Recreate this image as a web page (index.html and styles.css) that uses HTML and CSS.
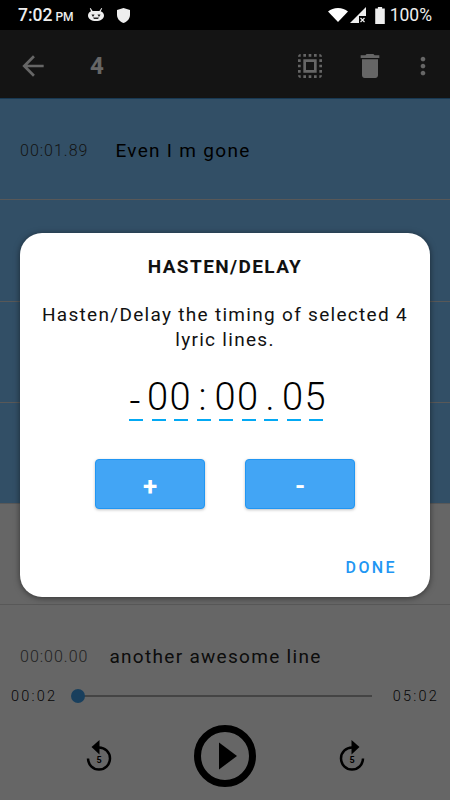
FILE: index.html
```html
<!DOCTYPE html>
<html lang="en">
<head>
  <meta charset="UTF-8" />
  <meta name="viewport" content="width=device-width, initial-scale=1.0" />
  <title>Hasten/Delay</title>
  <link rel="stylesheet" href="styles.css">
</head>
<body>
  <div class="app">
    <div class="statusbar">
      <span class="clock">7:02<small>PM</small></span>
      <svg class="st-cat" viewBox="0 0 16 14"><path d="M2.600 0l2 3h6.800l2-3 .8.5-1.600 2.700C14.900 4 16 5.600 16 7.500 16 11 12.500 13 8 13S0 11 0 7.500C0 5.600 1.100 4 3 3.200L1.800.5z" fill="#eee"/><path d="M3.500 6.500h3l-1 2h-1zM9.500 6.500h3l-1 2h-1zM5 9.500h6l-1 1.500H6z" fill="#222"/></svg>
      <svg class="st-shield" viewBox="0 0 14 16"><path d="M7 0l7 2.200v5C14 11.500 11 14.700 7 16 3 14.700 0 11.500 0 7.200v-5z" fill="#eee"/></svg>
      <span class="status-right">
        <svg class="st-wifi" viewBox="0 0 20 14"><path d="M0 3.600C2.700 1.300 6.200 0 10 0s7.300 1.300 10 3.600L10 14z" fill="#fff"/></svg>
        <svg class="st-signal" viewBox="0 0 16 16"><path d="M16 0v9H9v7H0z" fill="#eee"/><path d="M10.500 11l4 4m0-4l-4 4" stroke="#eee" stroke-width="1.200"/></svg>
        <svg class="st-batt" viewBox="0 0 9 16"><path d="M2.500 0h4v1.500H9V16H0V1.500h2.500z" fill="#eee"/></svg>
        <span class="batt-text">100%</span>
      </span>
    </div>

    <div class="toolbar">
      <svg class="tb-back" viewBox="0 0 24 24"><path d="M20 11H7.830l5.590-5.590L12 4l-8 8 8 8 1.410-1.410L7.830 13H20v-2z"/></svg>
      <span class="tb-count">4</span>
      <svg class="tb-select" viewBox="0 0 24 24"><path d="M3 5h2V3c-1.100 0-2 .9-2 2zm0 8h2v-2H3v2zm4 8h2v-2H7v2zM3 9h2V7H3v2zm10-6h-2v2h2V3zm6 0v2h2c0-1.100-.9-2-2-2zM5 21v-2H3c0 1.100.9 2 2 2zm-2-4h2v-2H3v2zM9 3H7v2h2V3zm2 18h2v-2h-2v2zm8-8h2v-2h-2v2zm0 8c1.100 0 2-.9 2-2h-2v2zm0-12h2V7h-2v2zm0 8h2v-2h-2v2zm-4 4h2v-2h-2v2zm0-16h2V3h-2v2zM7 17h10V7H7v10zm2-8h6v6H9V9z"/></svg>
      <svg class="tb-delete" viewBox="0 0 24 24"><path d="M6 19c0 1.100.9 2 2 2h8c1.100 0 2-.9 2-2V7H6v12zM19 4h-3.500l-1-1h-5l-1 1H5v2h14V4z"/></svg>
      <svg class="tb-more" viewBox="0 0 24 24"><path d="M12 8c1.100 0 2-.9 2-2s-.9-2-2-2-2 .9-2 2 .9 2 2 2zm0 2c-1.100 0-2 .9-2 2s.9 2 2 2 2-.9 2-2-.9-2-2-2zm0 6c-1.100 0-2 .9-2 2s.9 2 2 2 2-.9 2-2-.9-2-2-2z"/></svg>
    </div>

    <div class="list">
      <div class="row selected">
        <span class="row-time">00:01.89</span>
        <span class="row-lyric">Even I m gone</span>
      </div>
      <div class="row selected"></div>
      <div class="row selected"></div>
      <div class="row selected"></div>
      <div class="row"></div>
      <div class="row">
        <span class="row-time">00:00.00</span>
        <span class="row-lyric">another awesome line</span>
      </div>
    </div>

    <div class="player">
      <div class="seek">
        <span class="seek-time">00:02</span>
        <div class="track"><div class="thumb"></div></div>
        <span class="seek-time">05:02</span>
      </div>
      <div class="controls">
        <svg class="skip" viewBox="0 0 28 34">
          <path d="M14 8.500a11 11 0 1 1-11 11" fill="none" stroke="#000" stroke-width="2.500"/>
          <path d="M14.500 1L6.500 8l8 7.500z"/>
          <text x="14" y="23.500" text-anchor="middle" class="skip-num">5</text>
        </svg>
        <svg class="play" viewBox="0 0 64 64">
          <circle cx="32" cy="32" r="27.500" fill="none" stroke="#000" stroke-width="7"/>
          <path d="M26 18.500l18 13.500-18 13.500z"/>
        </svg>
        <svg class="skip" viewBox="0 0 28 34">
          <path d="M14 8.500a11 11 0 1 0 11 11" fill="none" stroke="#000" stroke-width="2.500"/>
          <path d="M13.500 1l8 7-8 7.500z"/>
          <text x="14" y="23.500" text-anchor="middle" class="skip-num">5</text>
        </svg>
      </div>
    </div>

    <div class="overlay">
      <div class="dialog">
        <h2 class="dialog-title">HASTEN/DELAY</h2>
        <p class="dialog-text">Hasten/Delay the timing of selected 4 lyric lines.</p>
        <div class="timer">
          <span class="dash">-</span><span>0</span><span>0</span><span>:</span><span>0</span><span>0</span><span>.</span><span>0</span><span>5</span>
        </div>
        <div class="btn-row">
          <button class="step-btn">+</button>
          <button class="step-btn">-</button>
        </div>
        <div class="dialog-actions">
          <button class="done-btn">DONE</button>
        </div>
      </div>
    </div>
  </div>
</body>
</html>
```

FILE: styles.css
```css
* {
  box-sizing: border-box;
}
body {
  margin: 0;
  font-family: 'Roboto', 'Liberation Sans', sans-serif;
  background: #fff;
  color: #000;
}
.app {
  position: relative;
  width: 450px;
  height: 800px;
  overflow: hidden;
  display: flex;
  flex-direction: column;
}

/* status bar */
.statusbar {
  height: 30px;
  background: #000;
  color: #eee;
  display: flex;
  align-items: center;
  padding: 0 18px;
  flex-shrink: 0;
}
.clock {
  font-size: 17.500px;
  font-weight: 500;
  width: 70px;
}
.clock small {
  font-size: 12px;
  margin-left: 3px;
}
.st-cat {
  width: 16px;
  height: 14px;
}
.st-shield {
  width: 13px;
  height: 15px;
  margin-left: 13px;
}
.status-right {
  margin-left: auto;
  display: flex;
  align-items: center;
}
.st-wifi {
  width: 20px;
  height: 14px;
}
.st-signal {
  width: 16px;
  height: 16px;
  margin-left: 2px;
}
.st-batt {
  width: 10px;
  height: 17px;
  margin-left: 9px;
}
.batt-text {
  font-size: 17.500px;
  margin-left: 5px;
}

/* toolbar */
.toolbar {
  height: 68px;
  background: #333;
  display: flex;
  align-items: center;
  padding: 3px 0 0 17px;
  flex-shrink: 0;
  position: relative;
}
.toolbar svg {
  fill: #fff;
  flex-shrink: 0;
}
.tb-back {
  width: 32px;
  height: 32px;
}
.tb-count {
  color: #fff;
  font-size: 24px;
  font-weight: 700;
  margin-left: 41px;
}
.tb-select {
  width: 32px;
  height: 32px;
  margin-left: auto;
}
.tb-delete {
  width: 32px;
  height: 32px;
  margin-left: 28px;
}
.tb-more {
  width: 28px;
  height: 28px;
  margin-left: 23px;
  margin-right: 13px;
}

/* lyric rows */
.list {
  height: 576px;
  overflow: hidden;
  flex-shrink: 0;
  border-top: 1px solid #3d8fd0;
}
.row {
  height: 101.300px;
  display: flex;
  align-items: center;
  padding: 2px 0 0 20px;
  border-bottom: 1px solid #ddd;
}
.row.selected {
  background: #7dc6ff;
}
.row-time {
  font-size: 16px;
  font-weight: 300;
  letter-spacing: 1px;
  color: #555;
}
.row-lyric {
  font-size: 19px;
  letter-spacing: 1.300px;
  margin-left: 21px;
  color: #222;
}
.selected .row-time {
  color: #333;
}
.selected .row-lyric {
  color: #000;
  margin-left: 27px;
}

/* player */
.player {
  flex: 1;
  display: flex;
  flex-direction: column;
}
.seek {
  display: flex;
  align-items: center;
  justify-content: space-between;
  padding: 0 11px;
  margin-top: 10px;
  height: 24px;
}
.seek-time {
  font-size: 14.500px;
  font-weight: 300;
  letter-spacing: 2.200px;
  color: #111;
}
.track {
  position: relative;
  width: 294px;
  height: 2px;
  background: #aaa;
}
.thumb {
  position: absolute;
  left: -7px;
  top: -6px;
  width: 14px;
  height: 14px;
  border-radius: 50%;
  background: #3f9fe8;
}
.controls {
  display: flex;
  align-items: center;
  justify-content: center;
  gap: 75.500px;
  margin-top: 16px;
}
.skip {
  width: 28px;
  height: 34px;
}
.play {
  width: 64px;
  height: 64px;
  margin: 0 5px;
}
.skip-num {
  font-size: 9px;
  font-weight: 700;
  font-family: 'Roboto', sans-serif;
}

/* dialog */
.overlay {
  position: absolute;
  top: 30px;
  left: 0;
  right: 0;
  bottom: 0;
  background: rgba(0,0,0,0.6);
  display: flex;
  align-items: center;
  justify-content: center;
}
.dialog {
  width: 410px;
  height: 364px;
  background: #fff;
  border-radius: 22px;
  padding-top: 24px;
  box-shadow: 0 1px 6px rgba(0,0,0,0.5);
  text-align: center;
  display: flex;
  flex-direction: column;
}
.dialog-title {
  margin: 0;
  font-size: 19px;
  font-weight: 700;
  line-height: 20px;
  letter-spacing: 1.400px;
  color: #111;
}
.dialog-text {
  margin: 25px 18px 0;
  font-size: 19px;
  line-height: 25px;
  letter-spacing: 1.300px;
  color: #111;
}
.timer {
  display: flex;
  justify-content: center;
  gap: 8.500px;
  margin: 23px 0 0 2px;
  font-size: 38px;
  font-weight: 300;
  line-height: 44px;
  color: #000;
}
.timer span {
  width: 14px;
  padding-right: 2px;
  display: flex;
  justify-content: center;
  border-bottom: 2px solid #03a9f4;
}
.timer .dash {
  line-height: 36px;
  padding-top: 8px;
}
.btn-row {
  display: flex;
  justify-content: center;
  gap: 40px;
  margin-top: 38px;
}
.step-btn {
  width: 110px;
  height: 50px;
  padding: 3px 0 0;
  background: #42a5f5;
  border: 1px solid #2196f3;
  border-radius: 4px;
  color: #fff;
  font-family: inherit;
  font-size: 26px;
  font-weight: 700;
  box-shadow: 0 1px 3px rgba(0,0,0,0.25);
}
.dialog-actions {
  display: flex;
  justify-content: flex-end;
  padding-right: 33px;
  margin-top: 49px;
}
.done-btn {
  background: none;
  border: none;
  padding: 0;
  font-family: inherit;
  font-size: 16px;
  font-weight: 500;
  letter-spacing: 2.400px;
  color: #2196f3;
}
```
